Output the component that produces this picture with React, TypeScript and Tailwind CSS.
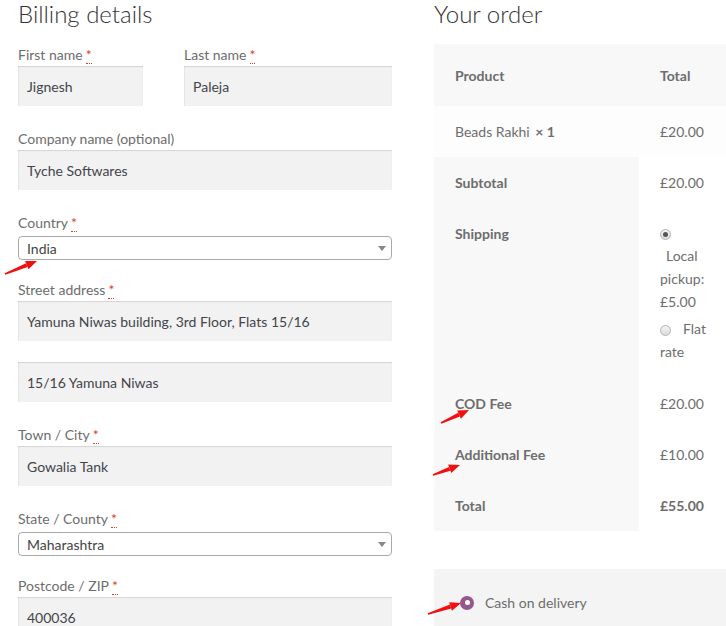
import React from 'react'

const font = { fontFamily: 'Lato, "Liberation Sans", sans-serif' }

function Req() {
  return <abbr title="required" className="ml-[3px] text-[#e2401c] no-underline border-b border-dotted border-[#e2401c]">*</abbr>
}

function Label({ children, req = true }: { children: React.ReactNode; req?: boolean }) {
  return (
    <label className="block h-[21px] text-[14px] leading-[21px] text-[#6d6d6d]">
      {children}
      {req && <Req />}
    </label>
  )
}

function Input({ value }: { value: string }) {
  return (
    <div className="flex h-[40px] items-center bg-[#f2f2f2] pl-[9px] text-[14px] text-[#43454b] shadow-[inset_0_1px_1px_rgba(0,0,0,0.125),inset_1px_0_0_rgba(0,0,0,0.04)]">
      {value}
    </div>
  )
}

function Select({ value }: { value: string }) {
  return (
    <div className="mt-[3px] flex h-[24px] items-center justify-between rounded-[4px] border border-[#aaa] bg-white pl-[8px] pr-[5px] text-[14px] text-[#444]">
      <span>{value}</span>
      <span className="h-0 w-0 border-x-[4px] border-t-[5px] border-x-transparent border-t-[#888]" />
    </div>
  )
}

function Radio({ checked }: { checked?: boolean }) {
  return (
    <span className="inline-flex h-[11px] w-[11px] items-center justify-center rounded-full border border-[#b4b4b4] bg-gradient-to-b from-[#f4f4f4] to-[#dcdcdc] align-middle">
      {checked && <span className="h-[5px] w-[5px] rounded-full bg-[#555]" />}
    </span>
  )
}

function Arrows() {
  const list = [
    [5, 274, 37, 261],
    [441, 423, 469, 410],
    [433, 475, 460, 465],
    [428, 614, 461, 603],
  ]
  return (
    <svg className="pointer-events-none absolute left-0 top-0" width="726" height="626">
      {list.map(([x1, y1, x2, y2], i) => {
        const dx = x2 - x1
        const dy = y2 - y1
        const len = Math.hypot(dx, dy)
        const ux = dx / len
        const uy = dy / len
        const bx = x2 - ux * 11
        const by = y2 - uy * 11
        const px = -uy * 4.5
        const py = ux * 4.5
        return (
          <g key={i} fill="#f01010">
            <polygon points={`${x1 + px * 0.2},${y1 + py * 0.2} ${x1 - px * 0.2},${y1 - py * 0.2} ${bx - px * 0.45},${by - py * 0.45} ${bx + px * 0.45},${by + py * 0.45}`} />
            <polygon points={`${x2},${y2} ${bx + px},${by + py} ${bx - px},${by - py}`} />
          </g>
        )
      })}
    </svg>
  )
}

export default function App() {
  return (
    <div className="relative flex h-[626px] w-[726px] overflow-hidden bg-white" style={font}>
      <div className="ml-[18px] w-[374px] shrink-0">
        <h3 className="mb-[16px] h-[28px] text-[24px] font-light leading-[28px] text-[#333]">Billing details</h3>

        <div className="flex gap-[41px]">
          <div className="w-[125px]">
            <Label>First name</Label>
            <div className="mt-px"><Input value="Jignesh" /></div>
          </div>
          <div className="flex-1">
            <Label>Last name</Label>
            <div className="mt-px"><Input value="Paleja" /></div>
          </div>
        </div>

        <div className="mt-[22px]">
          <Label req={false}>Company name (optional)</Label>
          <div className="mt-px"><Input value="Tyche Softwares" /></div>
        </div>

        <div className="mt-[22px]">
          <Label>Country</Label>
          <Select value="India" />
        </div>

        <div className="mt-[19px]">
          <Label>Street address</Label>
          <div className="mt-px"><Input value="Yamuna Niwas building, 3rd Floor, Flats 15/16" /></div>
          <div className="mt-[21px]"><Input value="15/16 Yamuna Niwas" /></div>
        </div>

        <div className="mt-[22px]">
          <Label>Town / City</Label>
          <div className="mt-px"><Input value="Gowalia Tank" /></div>
        </div>

        <div className="mt-[22px]">
          <Label>State / County</Label>
          <Select value="Maharashtra" />
        </div>

        <div className="mt-[19px]">
          <Label>Postcode / ZIP</Label>
          <div className="mt-px"><Input value="400036" /></div>
        </div>
      </div>

      <div className="ml-[42px] w-[300px] shrink-0">
        <h3 className="mb-[16px] h-[28px] text-[24px] font-light leading-[28px] text-[#333]">Your order</h3>

        <table className="w-[300px] table-fixed border-collapse text-[14px] leading-[21px] text-[#6d6d6d]">
          <colgroup>
            <col className="w-[205px]" />
            <col />
          </colgroup>
          <thead>
            <tr className="bg-[#f8f8f8]">
              <th className="px-[21px] pt-[21px] pb-[20px] text-left font-bold">Product</th>
              <th className="px-[21px] pt-[21px] pb-[20px] text-left font-bold">Total</th>
            </tr>
          </thead>
          <tbody>
            <tr className="bg-[#fdfdfd]">
              <td className="px-[21px] py-[15px]">
                Beads Rakhi <strong className="ml-[2px] font-bold">× 1</strong>
              </td>
              <td className="px-[21px] py-[15px]">£20.00</td>
            </tr>
          </tbody>
          <tfoot>
            <tr>
              <th className="bg-[#f8f8f8] px-[21px] py-[15px] text-left font-bold">Subtotal</th>
              <td className="bg-white px-[21px] py-[15px]">£20.00</td>
            </tr>
            <tr>
              <th className="bg-[#f8f8f8] px-[21px] py-[15px] text-left align-top font-bold">Shipping</th>
              <td className="bg-white px-[21px] pt-[13px] pb-[15px] align-top leading-[23px]">
                <div className="h-[23px]"><Radio checked /></div>
                <div className="pl-[6px]">Local</div>
                <div>pickup:</div>
                <div>£5.00</div>
                <div className="mt-[4px]"><Radio /><span className="ml-[12px]">Flat</span></div>
                <div>rate</div>
              </td>
            </tr>
            <tr>
              <th className="bg-[#f8f8f8] px-[21px] py-[15px] text-left font-bold">COD Fee</th>
              <td className="bg-white px-[21px] py-[15px]">£20.00</td>
            </tr>
            <tr>
              <th className="bg-[#f8f8f8] px-[21px] py-[15px] text-left font-bold">Additional Fee</th>
              <td className="bg-white px-[21px] py-[15px]">£10.00</td>
            </tr>
            <tr>
              <th className="bg-[#f8f8f8] px-[21px] py-[15px] text-left font-bold">Total</th>
              <td className="bg-white px-[21px] py-[15px] font-bold">£55.00</td>
            </tr>
          </tfoot>
        </table>

        <div className="mt-[38px] h-[80px] bg-[#f4f4f4] pl-[26px] pt-[23px]">
          <div className="flex h-[21px] items-center text-[14px] text-[#6d6d6d]">
            <span className="flex h-[14px] w-[14px] items-center justify-center rounded-full bg-[#96588a]">
              <span className="h-[5px] w-[5px] rounded-full bg-white" />
            </span>
            <span className="ml-[11px]">Cash on delivery</span>
          </div>
        </div>
      </div>

      <Arrows />
    </div>
  )
}
